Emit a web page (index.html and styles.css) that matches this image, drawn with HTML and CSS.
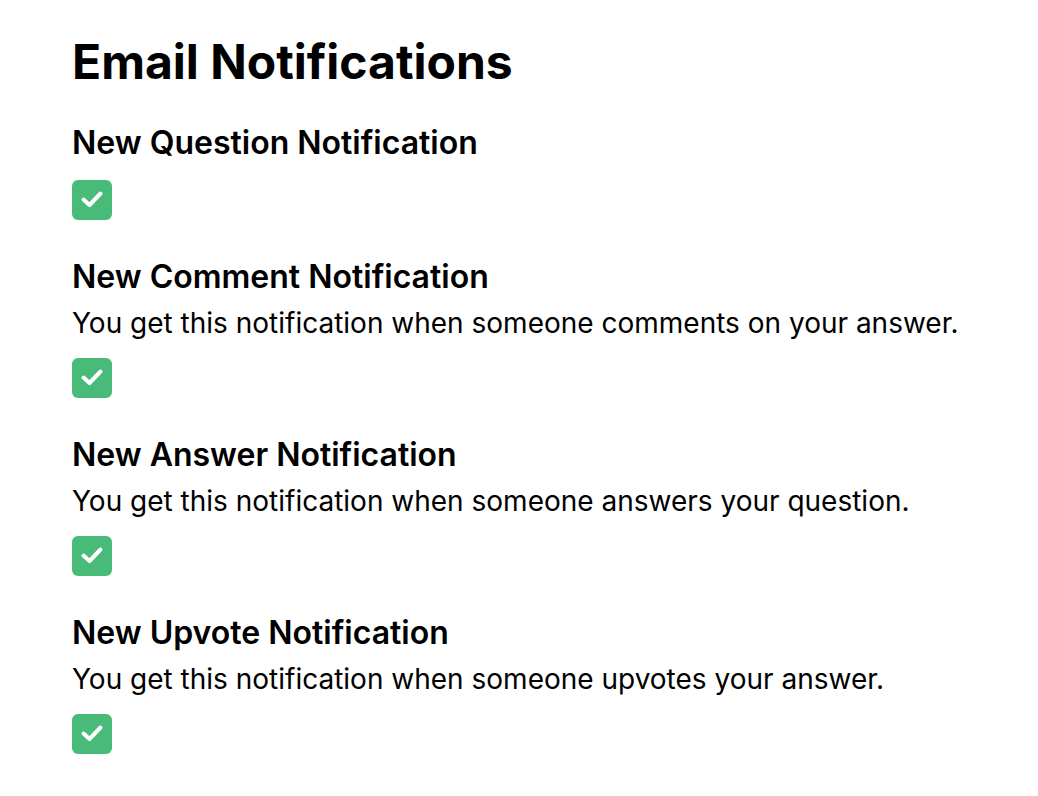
FILE: index.html
```html
<!DOCTYPE html>
<html>
<head>
<title>Email Notifications</title>
<link rel="stylesheet" href="styles.css">
</head>
<body>

<div class="settings">

<h1>Email Notifications</h1>

<div class="option">
	<h3>New Question Notification</h3>
	<label class="check"><input type="checkbox" checked><span class="box"><svg viewBox="0 0 40 40"><path d="M11.5 19.5l6 5.5 11-11.5"/></svg></span></label>
</div>

<div class="option">
	<h3>New Comment Notification</h3>
	<p>You get this notification when someone comments on your answer.</p>
	<label class="check"><input type="checkbox" checked><span class="box"><svg viewBox="0 0 40 40"><path d="M11.5 19.5l6 5.5 11-11.5"/></svg></span></label>
</div>

<div class="option">
	<h3>New Answer Notification</h3>
	<p>You get this notification when someone answers your question.</p>
	<label class="check"><input type="checkbox" checked><span class="box"><svg viewBox="0 0 40 40"><path d="M11.5 19.5l6 5.5 11-11.5"/></svg></span></label>
</div>

<div class="option">
	<h3>New Upvote Notification</h3>
	<p>You get this notification when someone upvotes your answer.</p>
	<label class="check"><input type="checkbox" checked><span class="box"><svg viewBox="0 0 40 40"><path d="M11.5 19.5l6 5.5 11-11.5"/></svg></span></label>
</div>

</div>

</body>
</html>
```

FILE: styles.css
```css
body {
	margin: 0;
	font-family: Inter, 'Noto Sans', sans-serif;
	color: #000;
	background: #fff;
}

.settings {
	padding: 32px 72px;
}

h1 {
	margin: 0 0 29px;
	font-size: 48px;
	font-weight: 700;
	line-height: 60px;
}

.option {
	margin-bottom: 35px;
}

.option h3 {
	margin: 0;
	font-size: 32px;
	font-weight: 600;
	line-height: 44px;
}

.option p {
	margin: 4px 0 0;
	font-size: 28px;
	line-height: 40px;
}

.check {
	display: flex;
	width: 40px;
	margin-top: 15px;
}

.check input {
	display: none;
}

.check .box {
	display: flex;
	width: 40px;
	height: 40px;
	border-radius: 6px;
	background-color: #48bb78;
}

.check svg {
	width: 40px;
	height: 40px;
	fill: none;
	stroke: #fff;
	stroke-width: 4;
	stroke-linecap: round;
	stroke-linejoin: round;
}
```
